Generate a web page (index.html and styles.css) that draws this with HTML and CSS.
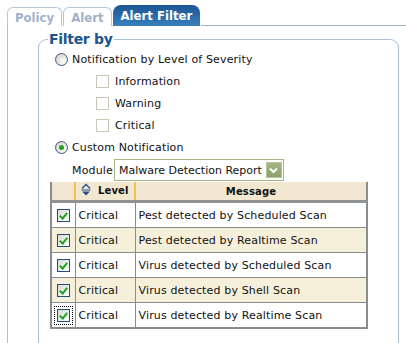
FILE: index.html
```html
<!DOCTYPE html>
<html lang="en">
<head>
  <meta charset="UTF-8" />
  <title>Alert Filter</title>
  <link rel="stylesheet" href="styles.css">
</head>
<body>
  <div class="tabs">
    <div class="tab">Policy</div>
    <div class="tab">Alert</div>
    <div class="tab active">Alert Filter</div>
    <div class="tab-fill"></div>
  </div>

  <div class="panel">
    <fieldset class="filter">
      <legend>Filter by</legend>

      <div class="opt">
        <span class="radio"></span>
        <span>Notification by Level of Severity</span>
      </div>
      <div class="opt sub"><span class="box"></span><span>Information</span></div>
      <div class="opt sub"><span class="box"></span><span>Warning</span></div>
      <div class="opt sub"><span class="box"></span><span>Critical</span></div>

      <div class="opt">
        <span class="radio on"></span>
        <span>Custom Notification</span>
      </div>

      <div class="module">
        <span>Module</span>
        <div class="select">
          <span class="select-text">Malware Detection Report</span>
          <span class="select-btn">
            <svg width="9" height="7" viewBox="0 0 9 7"><path d="M1 1.5 L4.5 5 L8 1.5" fill="none" stroke="#fff" stroke-width="2"/></svg>
          </span>
        </div>
      </div>

      <table class="grid">
        <thead>
          <tr>
            <th class="c-chk"></th>
            <th class="c-lvl">
              <span class="sort">
                <svg width="10" height="14" viewBox="0 0 10 14">
                  <path d="M1 5.5 L5 1.5 L9 5.5" fill="none" stroke="#1f4f86" stroke-width="1.3"/>
                  <path d="M0.5 7 L9.5 7" stroke="#1f4f86" stroke-width="1"/>
                  <path d="M1 8.5 L9 8.5 L5 12.5 Z" fill="#1f4f86"/>
                </svg>
              </span>Level
            </th>
            <th class="c-msg">Message</th>
          </tr>
        </thead>
        <tbody>
          <tr>
            <td class="c-chk"><span class="tick"></span></td>
            <td>Critical</td>
            <td>Pest detected by Scheduled Scan</td>
          </tr>
          <tr class="alt">
            <td class="c-chk"><span class="tick"></span></td>
            <td>Critical</td>
            <td>Pest detected by Realtime Scan</td>
          </tr>
          <tr>
            <td class="c-chk"><span class="tick"></span></td>
            <td>Critical</td>
            <td>Virus detected by Scheduled Scan</td>
          </tr>
          <tr class="alt">
            <td class="c-chk"><span class="tick"></span></td>
            <td>Critical</td>
            <td>Virus detected by Shell Scan</td>
          </tr>
          <tr>
            <td class="c-chk"><span class="tick focus"></span></td>
            <td>Critical</td>
            <td>Virus detected by Realtime Scan</td>
          </tr>
        </tbody>
      </table>
    </fieldset>
  </div>
</body>
</html>
```

FILE: styles.css
```css
body {
  margin: 0;
  background: #fff;
  font-family: 'DejaVu Sans', sans-serif;
  font-size: 11px;
  letter-spacing: 0.15px;
  color: #111;
}

.tabs {
  display: flex;
  align-items: flex-end;
  height: 26px;
  padding-left: 7px;
}

.tab {
  box-sizing: border-box;
  height: 19px;
  padding: 0 7px;
  margin-right: 1px;
  border: 1px solid #b3c6da;
  border-bottom: none;
  border-radius: 6px 6px 0 0;
  font-family: 'DejaVu Sans Condensed', 'DejaVu Sans', sans-serif;
  font-weight: bold;
  font-size: 13px;
  letter-spacing: 0;
  line-height: 19px;
  color: #9fb2c8;
}

.tab.active {
  height: 21px;
  line-height: 21px;
  padding: 0 8px;
  border: none;
  border-radius: 8px 8px 0 0;
  color: #fff;
  background: linear-gradient(#1b5591, #3a80bf);
}

.tab-fill {
  flex: 1;
  border-bottom: 1px solid #9ab5cf;
}

.panel {
  border-left: 1px solid #a7bfd7;
  margin-left: 7px;
  padding: 6px 7px 0 30px;
  min-height: 330px;
}

.filter {
  margin: 0;
  padding: 2px 0 30px 0;
  border: 1px solid #a9c0d8;
  border-bottom: none;
  border-radius: 9px 9px 0 0;
}

.filter legend {
  margin-left: 9px;
  padding: 0 1px;
  font-size: 14px;
  font-weight: bold;
  letter-spacing: -0.3px;
  color: #1c5590;
  line-height: 14px;
}

.opt {
  display: flex;
  align-items: center;
  height: 22px;
  padding-left: 16px;
}

.opt.sub {
  padding-left: 57px;
}

.radio {
  box-sizing: border-box;
  width: 13px;
  height: 13px;
  margin-right: 4px;
  border: 1px solid #3f5d80;
  border-radius: 50%;
  background: radial-gradient(circle at 65% 65%, #fff 0, #e6e6e0 45%, #c9c9c2 100%);
  position: relative;
}

.radio.on::after {
  content: "";
  position: absolute;
  left: 3px;
  top: 3px;
  width: 5px;
  height: 5px;
  border-radius: 50%;
  background: #21a121;
}

.box {
  box-sizing: border-box;
  width: 13px;
  height: 13px;
  margin-right: 6px;
  border: 1px solid #c9c6b6;
  background: #fff;
}

.module {
  display: flex;
  align-items: center;
  height: 24px;
  padding-left: 33px;
}

.module > span {
  margin-right: 1px;
}

.select {
  display: flex;
  align-items: center;
  box-sizing: border-box;
  width: 170px;
  height: 22px;
  padding: 0 1px 0 4px;
  border: 1px solid #a6b785;
  background: #fff;
  font-size: 11px;
  letter-spacing: 0;
  white-space: nowrap;
}

.select-text {
  flex: 1;
}

.select-btn {
  display: flex;
  align-items: center;
  justify-content: center;
  box-sizing: border-box;
  width: 16px;
  height: 16px;
  border: 1px solid #b7c59c;
  background: linear-gradient(#a4b684, #8ca06a);
}

.grid {
  margin-left: 11px;
  width: 318px;
  border-collapse: collapse;
  border: 2px solid #8a8d90;
  border-top: none;
}

.grid th {
  height: 18px;
  padding: 0;
  background: #f2e8d2;
  border-left: 2px solid #f5c24a;
  border-bottom: 3px solid #8f9295;
  font-size: 10px;
  font-weight: bold;
  text-align: center;
}

.grid th.c-chk {
  border-left: 2px solid #8a8d90;
}

.grid th.c-lvl {
  text-align: left;
  padding-left: 5px;
}

.sort {
  display: inline-block;
  vertical-align: -3px;
  margin-right: 7px;
}

.grid td {
  height: 24px;
  padding: 0 0 0 3px;
  border: 1px solid #8a8d90;
  font-size: 11px;
}

.grid tr.alt td {
  background: #f6f0da;
}

.c-chk {
  width: 22px;
}

.grid td.c-chk {
  padding: 0;
  text-align: center;
}

.c-lvl {
  width: 53px;
}

.tick {
  display: inline-block;
  vertical-align: middle;
  box-sizing: border-box;
  width: 13px;
  height: 13px;
  border: 1px solid #1f4f7f;
  background: linear-gradient(135deg, #d9d9d2, #fff);
  position: relative;
}

.tick::after {
  content: "";
  position: absolute;
  left: 3px;
  top: 1px;
  width: 3px;
  height: 6px;
  border: solid #21a121;
  border-width: 0 2px 2px 0;
  transform: rotate(40deg);
}

.tick.focus {
  outline: 1px dotted #000;
  outline-offset: 2px;
}
```
